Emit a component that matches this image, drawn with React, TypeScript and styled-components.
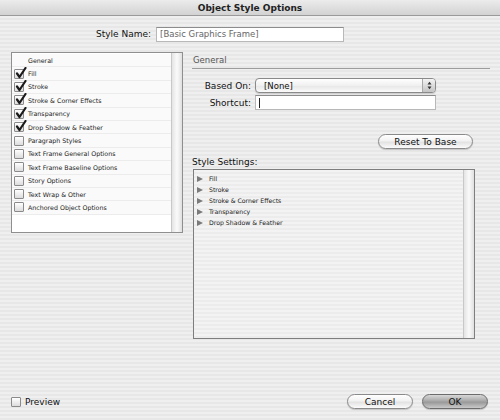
import React from "react";
import styled, { createGlobalStyle } from "styled-components";

const GlobalStyle = createGlobalStyle`
  html, body {
    margin: 0;
    padding: 0;
    background: #ececec;
  }
  * {
    box-sizing: border-box;
  }
`;

const Window = styled.div`
  width: 500px;
  height: 420px;
  display: flex;
  flex-direction: column;
  font-family: "DejaVu Sans", "Liberation Sans", sans-serif;
  color: #111;
  background: repeating-linear-gradient(#efefef 0 2px, #e7e7e7 2px 4px);
  overflow: hidden;
`;

const TitleBar = styled.div`
  height: 16px;
  display: flex;
  align-items: center;
  justify-content: center;
  font-size: 9px;
  font-weight: bold;
  color: #222;
  background: linear-gradient(#ececec, #d2d2d2);
  border-bottom: 1px solid #9a9a9a;
`;

const NameRow = styled.div`
  display: flex;
  align-items: center;
  margin: 10px 0 0 96px;
  height: 16px;
`;

const Label = styled.span<{ $width?: number }>`
  font-size: 9px;
  color: #111;
  width: ${({ $width }) => ($width ? `${$width}px` : "auto")};
  text-align: ${({ $width }) => ($width ? "right" : "left")};
  white-space: nowrap;
`;

const TextField = styled.div<{ $width: number; $gap?: number }>`
  width: ${({ $width }) => $width}px;
  height: 15px;
  margin-left: ${({ $gap }) => $gap ?? 5}px;
  background: #fff;
  border: 1px solid #b8b8b8;
  border-top-color: #8c8c8c;
  font-size: 8.5px;
  color: #666;
  display: flex;
  align-items: center;
  padding-left: 3px;
`;

const Caret = styled.span`
  width: 1px;
  height: 10px;
  background: #222;
`;

const Main = styled.div`
  display: flex;
  margin-top: 10px;
  flex: 1;
`;

const ListBox = styled.div`
  width: 172px;
  height: 181px;
  margin-left: 11px;
  border: 1px solid #8f8f8f;
  background: #fff;
  display: flex;
`;

const ListRows = styled.div`
  flex: 1;
  display: flex;
  flex-direction: column;
  padding-top: 1px;
`;

const ListRow = styled.div<{ $indent?: boolean }>`
  height: 13.4px;
  display: flex;
  align-items: center;
  padding-left: ${({ $indent }) => ($indent ? 16 : 2)}px;
  font-size: 6.3px;
  color: #222;
  border-bottom: 1px solid #ececec;
  background: #fafafa;
`;

const Check = styled.span`
  width: 10px;
  height: 10px;
  margin-right: 4px;
  position: relative;
  border: 1px solid #8a8a8a;
  border-radius: 1px;
  background: linear-gradient(#ffffff, #dcdcdc);
  flex-shrink: 0;
`;

const CheckMark = styled.svg`
  position: absolute;
  left: 0px;
  top: -3px;
`;

const ScrollTrack = styled.div`
  width: 11px;
  border-left: 1px solid #c8c8c8;
  background: linear-gradient(90deg, #e4e4e4, #fafafa 50%, #e0e0e0);
`;

const RightPanel = styled.div`
  margin-left: 9px;
  width: 298px;
  display: flex;
  flex-direction: column;
`;

const SectionTitle = styled.div`
  font-size: 8.5px;
  color: #555;
  padding: 3px 0 3px 1px;
  border-bottom: 1px solid #9c9c9c;
`;

const FormRow = styled.div<{ $top: number }>`
  display: flex;
  align-items: center;
  margin-top: ${({ $top }) => $top}px;
`;

const Popup = styled.div`
  width: 181px;
  height: 15px;
  margin-left: 4px;
  border: 1px solid #8a8a8a;
  border-radius: 4px;
  background: linear-gradient(#ffffff, #f0f0f0 50%, #e6e6e6 51%, #fafafa);
  display: flex;
  align-items: center;
  font-size: 8.5px;
  color: #111;
  padding-left: 8px;
  box-shadow: 0 1px 1px rgba(0, 0, 0, 0.15);
`;

const PopupText = styled.span`
  flex: 1;
`;

const PopupArrows = styled.span`
  width: 13px;
  height: 13px;
  border-left: 1px solid #a8a8a8;
  border-radius: 0 3px 3px 0;
  background: linear-gradient(#f4f4f4, #c4c4c4);
  display: flex;
  align-items: center;
  justify-content: center;
`;

const ButtonRow = styled.div<{ $top: number }>`
  display: flex;
  justify-content: flex-end;
  margin-top: ${({ $top }) => $top}px;
  padding-right: 17px;
`;

const PillButton = styled.button<{ $width: number; $primary?: boolean }>`
  width: ${({ $width }) => $width}px;
  height: 15px;
  border-radius: 8px;
  border: 1px solid ${({ $primary }) => ($primary ? "#6c6c6c" : "#8a8a8a")};
  background: ${({ $primary }) =>
    $primary
      ? "linear-gradient(#d8d8d8, #a9a9a9 45%, #999 55%, #c9c9c9)"
      : "linear-gradient(#ffffff, #f2f2f2 45%, #e2e2e2 55%, #fbfbfb)"};
  font-family: inherit;
  font-size: 9px;
  color: #111;
  padding: 0;
  display: flex;
  align-items: center;
  justify-content: center;
  box-shadow: 0 1px 1px rgba(0, 0, 0, 0.18);
`;

const SettingsLabel = styled.div`
  font-size: 9px;
  color: #111;
  margin: 8px 0 0 0;
`;

const TreeBox = styled.div`
  width: 282px;
  height: 170px;
  margin: 2px 0 0 1px;
  border: 1px solid #7e7e7e;
  background: repeating-linear-gradient(#f3f3f3 0 2px, #ececec 2px 4px);
  display: flex;
`;

const TreeItems = styled.div`
  flex: 1;
  padding: 3px 0 0 3px;
  display: flex;
  flex-direction: column;
`;

const TreeItem = styled.div`
  height: 11px;
  display: flex;
  align-items: center;
  font-size: 6.2px;
  color: #222;
`;

const Triangle = styled.span`
  width: 0;
  height: 0;
  border-top: 3.5px solid transparent;
  border-bottom: 3.5px solid transparent;
  border-left: 6px solid #7a7a7a;
  margin-right: 6px;
`;

const Footer = styled.div`
  display: flex;
  align-items: center;
  justify-content: space-between;
  padding: 0 12px 11px 11px;
`;

const PreviewToggle = styled.label`
  display: flex;
  align-items: center;
  font-size: 9px;
  color: #111;
`;

const FooterButtons = styled.div`
  display: flex;
  gap: 9px;
`;

const listItems = [
  { label: "Fill", checked: true },
  { label: "Stroke", checked: true },
  { label: "Stroke & Corner Effects", checked: true },
  { label: "Transparency", checked: true },
  { label: "Drop Shadow & Feather", checked: true },
  { label: "Paragraph Styles", checked: false },
  { label: "Text Frame General Options", checked: false },
  { label: "Text Frame Baseline Options", checked: false },
  { label: "Story Options", checked: false },
  { label: "Text Wrap & Other", checked: false },
  { label: "Anchored Object Options", checked: false },
];

const settings = [
  "Fill",
  "Stroke",
  "Stroke & Corner Effects",
  "Transparency",
  "Drop Shadow & Feather",
];

const Tick = () => (
  <CheckMark width="12" height="12" viewBox="0 0 12 12">
    <path
      d="M2 6.5 L4.5 10 L10.5 1"
      fill="none"
      stroke="#1a1a1a"
      strokeWidth="2.2"
      strokeLinecap="round"
      strokeLinejoin="round"
    />
  </CheckMark>
);

const App: React.FC = () => {
  return (
    <>
      <GlobalStyle />
      <Window>
        <TitleBar>Object Style Options</TitleBar>

        <NameRow>
          <Label>Style Name:</Label>
          <TextField $width={188}>[Basic Graphics Frame]</TextField>
        </NameRow>

        <Main>
          <ListBox>
            <ListRows>
              <ListRow $indent>General</ListRow>
              {listItems.map((item) => (
                <ListRow key={item.label}>
                  <Check>{item.checked && <Tick />}</Check>
                  {item.label}
                </ListRow>
              ))}
            </ListRows>
            <ScrollTrack />
          </ListBox>

          <RightPanel>
            <SectionTitle>General</SectionTitle>

            <FormRow $top={9}>
              <Label $width={59}>Based On:</Label>
              <Popup>
                <PopupText>[None]</PopupText>
                <PopupArrows>
                  <svg width="5" height="9" viewBox="0 0 5 9">
                    <path d="M0.5 3.5 L2.5 0.8 L4.5 3.5 Z" fill="#333" />
                    <path d="M0.5 5.5 L2.5 8.2 L4.5 5.5 Z" fill="#333" />
                  </svg>
                </PopupArrows>
              </Popup>
            </FormRow>

            <FormRow $top={2}>
              <Label $width={59}>Shortcut:</Label>
              <TextField $width={181} $gap={4}>
                <Caret />
              </TextField>
            </FormRow>

            <ButtonRow $top={24}>
              <PillButton $width={95}>Reset To Base</PillButton>
            </ButtonRow>

            <SettingsLabel>Style Settings:</SettingsLabel>
            <TreeBox>
              <TreeItems>
                {settings.map((s) => (
                  <TreeItem key={s}>
                    <Triangle />
                    {s}
                  </TreeItem>
                ))}
              </TreeItems>
              <ScrollTrack />
            </TreeBox>
          </RightPanel>
        </Main>

        <Footer>
          <PreviewToggle>
            <Check />
            Preview
          </PreviewToggle>
          <FooterButtons>
            <PillButton $width={66}>Cancel</PillButton>
            <PillButton $width={66} $primary>
              OK
            </PillButton>
          </FooterButtons>
        </Footer>
      </Window>
    </>
  );
};

export default App;
